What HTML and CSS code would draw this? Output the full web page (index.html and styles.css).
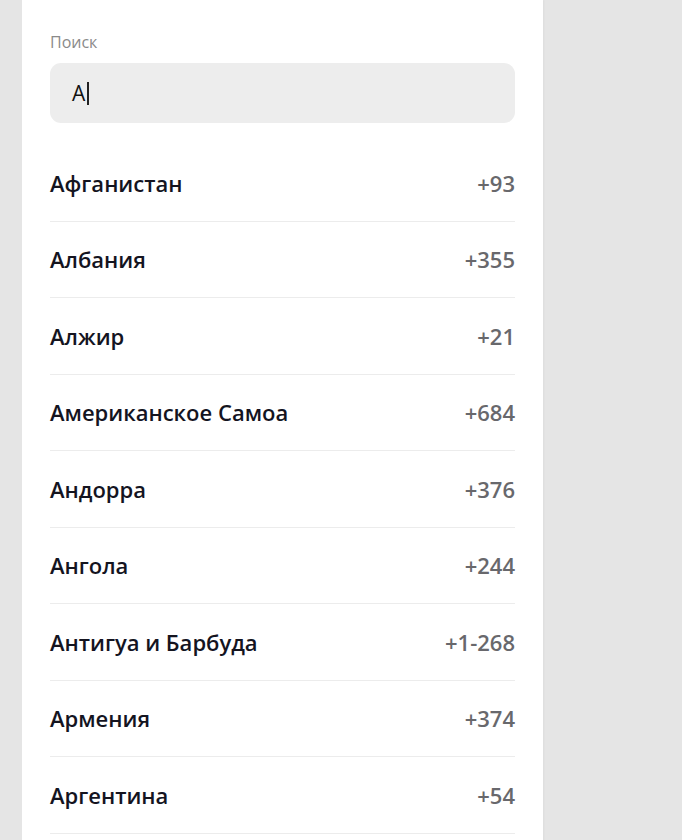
FILE: index.html
```html
<!DOCTYPE html>
<html lang="ru">
<head>
<meta charset="utf-8">
<title>Поиск страны</title>
<link rel="stylesheet" href="styles.css">
</head>
<body>
<div class="page">
  <div class="panel">
    <label class="label">Поиск</label>
    <div class="input"><span class="value">A</span><span class="caret"></span></div>
    <ul class="list">
      <li class="row"><span class="name">Афганистан</span><span class="code">+93</span></li>
      <li class="row"><span class="name">Албания</span><span class="code">+355</span></li>
      <li class="row"><span class="name">Алжир</span><span class="code">+21</span></li>
      <li class="row"><span class="name">Американское Самоа</span><span class="code">+684</span></li>
      <li class="row"><span class="name">Андорра</span><span class="code">+376</span></li>
      <li class="row"><span class="name">Ангола</span><span class="code">+244</span></li>
      <li class="row"><span class="name">Антигуа и Барбуда</span><span class="code">+1-268</span></li>
      <li class="row"><span class="name">Армения</span><span class="code">+374</span></li>
      <li class="row"><span class="name">Аргентина</span><span class="code">+54</span></li>
    </ul>
  </div>
</div>
</body>
</html>
```
FILE: styles.css
```css
html, body {
  margin: 0;
  padding: 0;
  height: 100%;
  overflow: hidden;
  background: #e5e5e5;
  font-family: "Open Sans", "Noto Sans", sans-serif;
}
.page {
  padding-left: 22px;
  height: 100%;
}
.panel {
  width: 465px;
  padding: 31px 28px 0 28px;
  background: #ffffff;
  height: 100%;
  box-shadow: 1px 0 2px rgba(0,0,0,0.04);
}
.label {
  display: block;
  font-size: 16px;
  line-height: 22px;
  color: #8a8a8a;
  margin-bottom: 10px;
}
.input {
  height: 60px;
  background: #ededed;
  border-radius: 11px;
  display: flex;
  align-items: center;
  padding-left: 22px;
  font-size: 21px;
  color: #111;
}
.caret {
  display: inline-block;
  width: 1.5px;
  height: 23px;
  background: #222;
  margin-left: 2px;
}
.list {
  list-style: none;
  margin: 22px 0 0 0;
  padding: 0;
}
.row {
  box-sizing: border-box;
  display: flex;
  justify-content: space-between;
  align-items: center;
  height: 76.5px;
  border-bottom: 1.5px solid #ececec;
  font-size: 22px;
}
.name {
  font-weight: 600;
  color: #14141f;
}
.code {
  color: #68686c;
  font-weight: 600;
}
```
